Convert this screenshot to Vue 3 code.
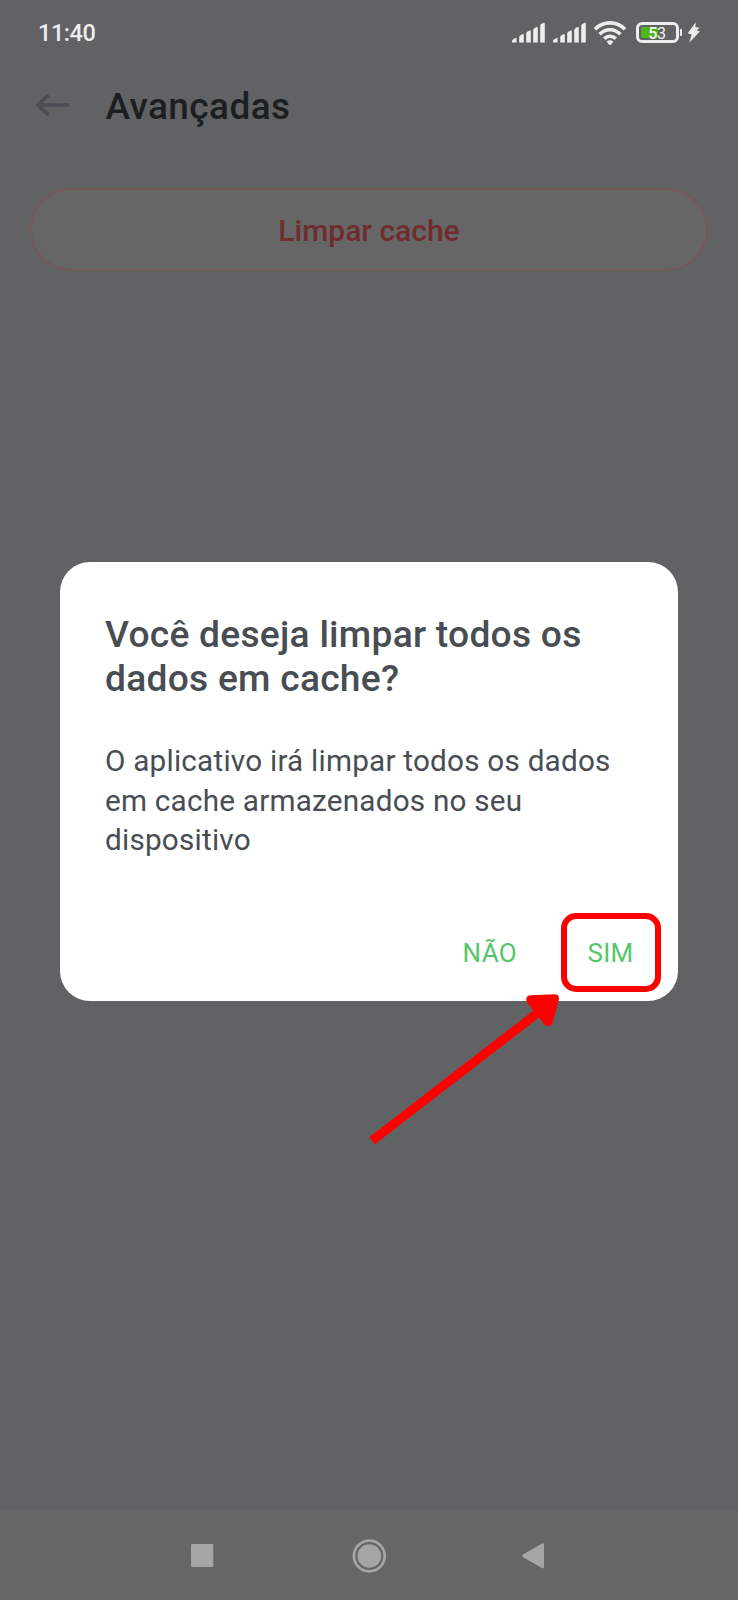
<script setup>
const bars = [
  { x: 0, y: 16, h: 4.5 },
  { x: 7.2, y: 12.2, h: 8.3 },
  { x: 14.2, y: 8.6, h: 11.9 },
  { x: 21.2, y: 5, h: 15.5 },
  { x: 28.2, y: 0.8, h: 19.7 },
]
</script>

<template>
  <div class="screen">
    <header class="status">
      <span class="time">11:40</span>
      <div class="indicators">
        <svg v-for="n in 2" :key="n" class="signal" width="34" height="22" viewBox="0 0 34 22">
          <path
            v-for="b in bars"
            :key="b.x"
            :d="`M${b.x} ${b.y + 3}Q${b.x} ${b.y + 1.6} ${b.x + 1.6} ${b.y + 0.9}L${b.x + 3.4} ${b.y}Q${b.x + 4.6} ${b.y - 0.5} ${b.x + 4.6} ${b.y + 1}V${b.y + b.h}H${b.x}Z`"
          />
        </svg>
        <svg class="wifi" width="34" height="26" viewBox="0 0 34 26">
          <g fill="none" stroke="#ededed" stroke-width="3.6">
            <path d="M2 9.2C10.5 .7 23.500 .7 32 9.200" />
            <path d="M6.600 14.300C12.500 8.200 21.500 8.200 27.400 14.300" />
            <path d="M11.200 18.700C14.500 15.500 19.500 15.500 22.800 18.700" />
          </g>
          <path d="M13.600 21.600Q17 19 20.400 21.600L18.300 24.300Q17 25.600 15.700 24.300Z" />
        </svg>
        <div class="battery">
          <div class="charge"></div>
          <span class="percent"><b>5</b>3</span>
        </div>
        <i class="battery-tip"></i>
        <svg class="bolt" width="14" height="22" viewBox="0 0 14 22">
          <path d="M8.800 .3L.7 11.200L4.700 12.500L2.200 20.800L13 9.300L9.600 8.500L12.600 5.500L8.300 5.300Z" />
        </svg>
      </div>
    </header>

    <div class="appbar">
      <svg class="back" width="36" height="26" viewBox="0 0 36 26">
        <path d="M34.500 13H3M13.500 3L3 13L13.500 23" fill="none" stroke="#4a4d52" stroke-width="3.700" />
      </svg>
      <h1>Avançadas</h1>
    </div>

    <main>
      <button class="clear">Limpar cache</button>
    </main>

    <nav class="navbar">
      <svg width="738" height="86" viewBox="0 0 738 86">
        <g fill="#a5a5a5">
          <rect x="191" y="33" width="22.300" height="23" rx="1.200" />
          <circle cx="369.300" cy="45" r="11.800" />
          <circle cx="369.300" cy="45" r="15.400" fill="none" stroke="#a5a5a5" stroke-width="2.700" />
          <path d="M522.600 43.800L542 32.600Q544 31.700 544 34V55.800Q544 58.200 542 57L522.600 46Q521.600 44.900 522.600 43.800Z" />
        </g>
      </svg>
    </nav>

    <section class="dialog">
      <h2>Você deseja limpar todos os<br />dados em cache?</h2>
      <p>O aplicativo irá limpar todos os dados<br />em cache armazenados no seu<br />dispositivo</p>
      <div class="actions">
        <button class="action">NÃO</button>
        <button class="action highlighted">SIM</button>
      </div>
    </section>

    <svg class="arrow" width="200" height="160" viewBox="360 990 200 160">
      <path d="M369.300 1137.300L534.600 1009.600L540.200 1016.600L374.800 1144.300Z" fill="red" />
      <path d="M530.500 995.200L554.500 994.300Q559.700 994.300 558.800 1000L552.700 1022.500Q550 1028.300 544.600 1024.900L526.700 1001.700Q524.800 996 530.500 995.200Z" fill="red" />
    </svg>
  </div>
</template>

<style>
body {
  margin: 0;
  background: #616264;
}
</style>

<style scoped>
.screen {
  position: relative;
  display: flex;
  flex-direction: column;
  width: 738px;
  height: 1600px;
  overflow: hidden;
  background: #616264;
  font-family: Roboto, "Liberation Sans", sans-serif;
}
h1, h2, p { margin: 0; }
button {
  padding: 0;
  border: 0;
  background: none;
  font-family: inherit;
}
.status {
  display: flex;
  justify-content: space-between;
  height: 64px;
  padding: 0 37px 0 38px;
  box-sizing: border-box;
}
.time {
  padding-top: 18px;
  font-size: 23.500px;
  line-height: 30px;
  font-weight: 500;
  letter-spacing: -0.450px;
  color: #ededed;
}
.indicators {
  display: flex;
  align-items: flex-start;
  padding-top: 20px;
}
.indicators svg { fill: #ededed; }
.signal { margin: 2px 6.800px 0 0; }
.signal:first-child { margin-left: 1px; }
.wifi { margin-left: -1px; }
.battery {
  position: relative;
  width: 43px;
  height: 21px;
  margin: 2px 0 0 9px;
  box-sizing: border-box;
  border: 3px solid #ededed;
  border-radius: 6px;
}
.charge {
  width: 17px;
  height: 11px;
  margin: 2px 0 0 2px;
  border-radius: 2px;
  background: #4fb512;
}
.percent {
  position: absolute;
  inset: 0;
  font-size: 16px;
  line-height: 17px;
  letter-spacing: -0.300px;
  text-align: center;
  color: #f4f4f4;
}
.percent b { font-weight: 500; }
.battery-tip {
  width: 2.500px;
  height: 7px;
  margin: 9px 0 0 1px;
  border-radius: 0 1px 1px 0;
  background: #ededed;
}
.bolt { margin: 2px 0 0 5px; }
.appbar {
  display: flex;
  height: 124px;
  padding-left: 35px;
}
.back { margin-top: 28px; }
h1 {
  margin: 19px 0 0 34.500px;
  font-size: 37px;
  line-height: 47px;
  font-weight: 500;
  letter-spacing: 0.400px;
  color: #1d1e20;
}
main { flex: 1; }
.clear {
  display: block;
  width: 678px;
  height: 83px;
  margin-left: 30px;
  box-sizing: border-box;
  padding-top: 2px;
  border: 2px solid #765858;
  border-radius: 42px;
  background: #666;
  font-size: 30px;
  font-weight: 500;
  color: #6f2c2d;
}
.navbar {
  height: 89px;
  background: #666;
}
.navbar svg { display: block; }
.dialog {
  position: absolute;
  left: 60px;
  top: 562px;
  display: flex;
  flex-direction: column;
  width: 618px;
  height: 439px;
  padding: 50px 17px 9px 45px;
  box-sizing: border-box;
  border-radius: 30px;
  background: #fff;
}
h2 {
  font-size: 37.200px;
  line-height: 44px;
  font-weight: 500;
  letter-spacing: 0.250px;
  color: #484d54;
  white-space: nowrap;
}
p {
  margin-top: 41px;
  font-size: 29.700px;
  line-height: 39.500px;
  letter-spacing: 0.220px;
  color: #484d54;
  white-space: nowrap;
}
.actions {
  display: flex;
  justify-content: flex-end;
  align-items: center;
  gap: 44px;
  margin-top: auto;
}
.action {
  padding-top: 1px;
  font-size: 26px;
  letter-spacing: 0.300px;
  color: #53c669;
}
.highlighted {
  width: 100px;
  height: 79px;
  padding-right: 1px;
  border: 6px solid red;
  border-radius: 15px;
}
.arrow {
  position: absolute;
  left: 360px;
  top: 990px;
}
</style>
